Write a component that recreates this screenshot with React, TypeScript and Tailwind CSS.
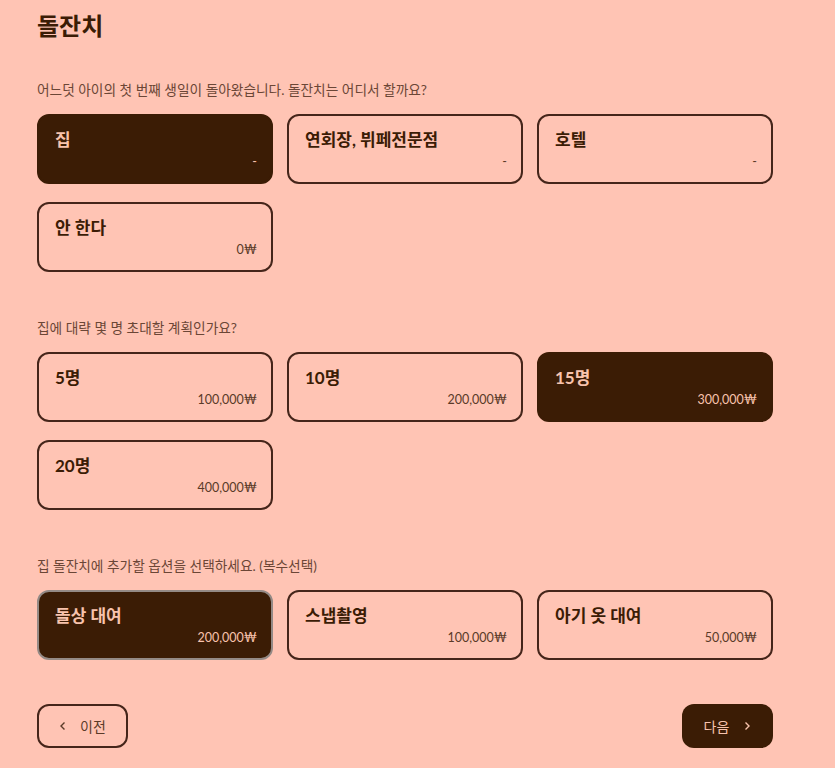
import { useState } from "react";

type Option = {
  label: string;
  price: string;
};

const venues: Option[] = [
  { label: "집", price: "-" },
  { label: "연회장, 뷔페전문점", price: "-" },
  { label: "호텔", price: "-" },
  { label: "안 한다", price: "0₩" },
];

const guests: Option[] = [
  { label: "5명", price: "100,000₩" },
  { label: "10명", price: "200,000₩" },
  { label: "15명", price: "300,000₩" },
  { label: "20명", price: "400,000₩" },
];

const extras: Option[] = [
  { label: "돌상 대여", price: "200,000₩" },
  { label: "스냅촬영", price: "100,000₩" },
  { label: "아기 옷 대여", price: "50,000₩" },
];

const font = { fontFamily: "Lato, 'Noto Sans CJK KR', sans-serif" };

function OptionCard({
  option,
  selected,
  focused,
  onClick,
}: {
  option: Option;
  selected: boolean;
  focused?: boolean;
  onClick: () => void;
}) {
  return (
    <button
      type="button"
      onClick={onClick}
      className={`flex h-[70px] flex-col rounded-[12px] border-2 pl-4 pr-[14px] pt-[12px] text-left ${
        selected
          ? `bg-[#3b1c05] text-[#f8c3ad] ${focused ? "border-[#948a86]" : "border-[#3b1c05]"}`
          : "border-[#45251a] bg-transparent text-[#3b1c05]"
      }`}
    >
      <span className="text-[17px] font-bold leading-6">{option.label}</span>
      <span
        className={`self-end text-[12.5px] leading-5 ${selected ? "text-[#f8c3ad]" : "text-[#5a3a28]"}`}
      >
        {option.price}
      </span>
    </button>
  );
}

function Section({
  question,
  options,
  isSelected,
  onToggle,
  focusedIndex,
  first,
}: {
  question: string;
  options: Option[];
  isSelected: (i: number) => boolean;
  onToggle: (i: number) => void;
  focusedIndex?: number;
  first?: boolean;
}) {
  return (
    <section className={first ? "mt-[38px]" : "mt-[46px]"}>
      <p className="text-[13.7px] leading-5 text-[#6b4636]">{question}</p>
      <div className="mt-[14px] grid w-[736px] grid-cols-3 gap-x-[14px] gap-y-[18px]">
        {options.map((option, i) => (
          <OptionCard
            key={option.label}
            option={option}
            selected={isSelected(i)}
            focused={focusedIndex === i}
            onClick={() => onToggle(i)}
          />
        ))}
      </div>
    </section>
  );
}

export default function App() {
  const [venue, setVenue] = useState(0);
  const [guest, setGuest] = useState(2);
  const [extraSet, setExtraSet] = useState<number[]>([0]);

  const toggleExtra = (i: number) => {
    setExtraSet((prev) => (prev.includes(i) ? prev.filter((x) => x !== i) : [...prev, i]));
  };

  return (
    <div className="min-h-[768px] bg-[#ffc4b4] px-[37px] pt-[10px]" style={font}>
      <h1 className="text-[24px] font-bold leading-8 text-[#3b1c05]">돌잔치</h1>

      <Section
        first
        question="어느덧 아이의 첫 번째 생일이 돌아왔습니다. 돌잔치는 어디서 할까요?"
        options={venues}
        isSelected={(i) => venue === i}
        onToggle={setVenue}
      />

      <Section
        question="집에 대략 몇 명 초대할 계획인가요?"
        options={guests}
        isSelected={(i) => guest === i}
        onToggle={setGuest}
      />

      <Section
        question="집 돌잔치에 추가할 옵션을 선택하세요. (복수선택)"
        options={extras}
        isSelected={(i) => extraSet.includes(i)}
        onToggle={toggleExtra}
        focusedIndex={0}
      />

      <div className="mt-[44px] flex w-[736px] items-center justify-between">
        <button
          type="button"
          className="flex h-[44px] w-[91px] items-center justify-center gap-[11px] rounded-[12px] border-2 border-[#45251a] pr-[2px] text-[14px] text-[#5a3a28]"
        >
          <svg width="12" height="12" viewBox="0 0 12 12" fill="none" stroke="currentColor" strokeWidth="1.4">
            <path d="M7.5 2.5 4 6l3.5 3.5" />
          </svg>
          <span>이전</span>
        </button>
        <button
          type="button"
          className="flex h-[44px] w-[91px] items-center justify-center gap-[12px] rounded-[12px] bg-[#3b1c05] pl-[2px] text-[14px] text-[#f8c3ad]"
        >
          <span>다음</span>
          <svg width="12" height="12" viewBox="0 0 12 12" fill="none" stroke="currentColor" strokeWidth="1.4">
            <path d="M4.5 2.5 8 6l-3.5 3.5" />
          </svg>
        </button>
      </div>
    </div>
  );
}
